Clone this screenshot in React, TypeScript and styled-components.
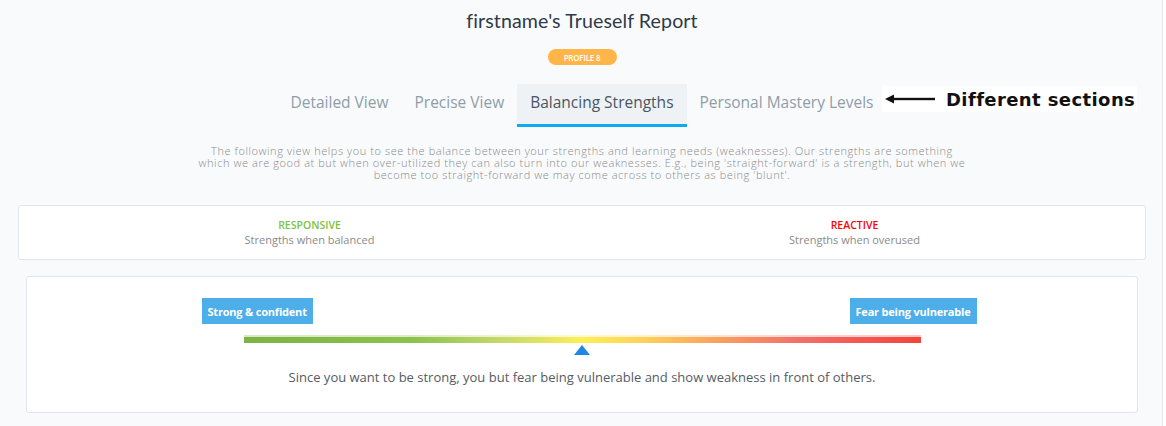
import React from "react";
import styled, { createGlobalStyle } from "styled-components";

const Global = createGlobalStyle`
  html, body { margin: 0; padding: 0; background: #f9fafc; }
  body { font-family: "Open Sans", Arial, sans-serif; }
`;

const Page = styled.div`
  width: 1166px;
  height: 426px;
  box-sizing: border-box;
  background: #f9fafc;
  border-right: 3px solid #fff;
  position: relative;
  overflow: hidden;
  &::after {
    content: "";
    position: absolute;
    top: 0;
    bottom: 0;
    right: 0;
    width: 1px;
    background: #e6e9ee;
  }
`;

const Main = styled.div`
  padding: 9px 17px 0 18px;
  display: flex;
  flex-direction: column;
  align-items: center;
`;

const Title = styled.h1`
  margin: 0;
  font-family: Lato, "Open Sans", sans-serif;
  font-weight: 400;
  font-size: 19.6px;
  line-height: 24px;
  color: #2f3a48;
  letter-spacing: 0.1px;
`;

const Badge = styled.span`
  margin-top: 16px;
  display: inline-flex;
  align-items: center;
  justify-content: center;
  height: 16px;
  width: 69px;
  border-radius: 8px;
  background: #ffb547;
  color: #fff;
  font-family: "Open Sans", sans-serif;
  font-weight: 600;
  font-size: 8px;
  letter-spacing: -0.2px;
`;

const TabsRow = styled.div`
  margin-top: 19px;
  display: flex;
`;

const Tab = styled.div<{ $active?: boolean }>`
  height: 43px;
  padding: 0 13px 5px;
  box-sizing: border-box;
  display: flex;
  align-items: center;
  font-size: 15.5px;
  color: ${(p) => (p.$active ? "#4a5663" : "#8e9ea9")};
  background: ${(p) => (p.$active ? "#eef2f4" : "transparent")};
  border-bottom: 3px solid ${(p) => (p.$active ? "#10a8ef" : "transparent")};
`;

const Annotation = styled.div`
  position: absolute;
  left: 882px;
  top: 86px;
  height: 26px;
  width: 255px;
  background: #fff;
  display: flex;
  align-items: center;
  gap: 11px;
  padding-left: 3px;
  box-sizing: border-box;
  font-family: "DejaVu Sans", sans-serif;
  font-weight: 700;
  font-size: 18px;
  letter-spacing: 0.4px;
  color: #111;
  white-space: nowrap;
`;

const Intro = styled.p`
  margin: 18px 0 0;
  width: 820px;
  text-align: center;
  font-family: "Open Sans", sans-serif;
  font-weight: 300;
  font-size: 11px;
  letter-spacing: 0.57px;
  line-height: 12px;
  color: #8a8a8a;
`;

const Card = styled.div`
  background: #fff;
  border: 1px solid #dfe6ee;
  border-radius: 3px;
  box-sizing: border-box;
`;

const LegendCard = styled(Card)`
  margin-top: 24px;
  width: 100%;
  height: 55px;
  padding: 0 18px;
  display: grid;
  grid-template-columns: 1fr 1fr;
  align-items: center;
`;

const LegendCol = styled.div`
  display: flex;
  flex-direction: column;
  align-items: center;
  padding-top: 1px;
`;

const LegendTitle = styled.div<{ $color: string }>`
  font-size: 10.5px;
  font-weight: 600;
  line-height: 13px;
  color: ${(p) => p.$color};
`;

const LegendSub = styled.div`
  font-size: 11px;
  line-height: 15px;
  color: #8a8a8a;
`;

const ScaleCard = styled(Card)`
  margin-top: 16px;
  width: 1112px;
  height: 137px;
  display: flex;
  flex-direction: column;
  align-items: center;
  padding-top: 21px;
`;

const LabelsRow = styled.div`
  width: 775px;
  margin-left: 14px;
  display: flex;
  justify-content: space-between;
`;

const Label = styled.div`
  height: 26px;
  padding: 0 6px;
  display: flex;
  align-items: center;
  background: #4daee9;
  color: #fff;
  font-size: 11px;
  font-weight: 700;
  letter-spacing: -0.2px;
`;

const Bar = styled.div`
  margin-top: 11px;
  width: 677px;
  height: 8px;
  position: relative;
  background:
    linear-gradient(rgba(255, 255, 255, 0.7), rgba(255, 255, 255, 0.7)) top / 100% 2px no-repeat,
    linear-gradient(
      to right,
      #7cb342 0%,
      #8bc34a 25%,
      #c5d96a 38%,
      #ffee58 50%,
      #fdd55a 58%,
      #f9a15e 70%,
      #f36f6a 82%,
      #f2443a 100%
    );
`;

const Marker = styled.div`
  position: absolute;
  top: 10px;
  transform: translateX(-50%);
  width: 0;
  height: 0;
  border-left: 8px solid transparent;
  border-right: 8px solid transparent;
  border-bottom: 10px solid #1e88e5;
`;

const Summary = styled.p`
  margin: 25px 0 0;
  font-size: 13px;
  color: #555b63;
`;

export default function App() {
  const position = 50;
  return (
    <Page>
      <Global />
      <Main>
        <Title>firstname's Trueself Report</Title>
        <Badge>PROFILE 8</Badge>
        <TabsRow>
          <Tab>Detailed View</Tab>
          <Tab>Precise View</Tab>
          <Tab $active>Balancing Strengths</Tab>
          <Tab>Personal Mastery Levels</Tab>
        </TabsRow>
        <Intro>
          The following view helps you to see the balance between your strengths and learning needs
          (weaknesses). Our strengths are something
          <br />
          which we are good at but when over-utilized they can also turn into our weaknesses. E.g.,
          being 'straight-forward' is a strength, but when we
          <br />
          become too straight-forward we may come across to others as being 'blunt'.
        </Intro>
        <LegendCard>
          <LegendCol>
            <LegendTitle $color="#7dc242">RESPONSIVE</LegendTitle>
            <LegendSub>Strengths when balanced</LegendSub>
          </LegendCol>
          <LegendCol>
            <LegendTitle $color="#ff0000">REACTIVE</LegendTitle>
            <LegendSub>Strengths when overused</LegendSub>
          </LegendCol>
        </LegendCard>
        <ScaleCard>
          <LabelsRow>
            <Label>Strong &amp; confident</Label>
            <Label>Fear being vulnerable</Label>
          </LabelsRow>
          <Bar>
            <Marker style={{ left: `${position}%` }} />
          </Bar>
          <Summary>
            Since you want to be strong, you but fear being vulnerable and show weakness in front of others.
          </Summary>
        </ScaleCard>
      </Main>
      <Annotation>
        <svg width="50" height="10" viewBox="0 0 50 10">
          <path d="M0 5 L9 0.5 L9 9.5 Z" fill="#111" />
          <rect x="6" y="3.8" width="44" height="2.4" fill="#111" />
        </svg>
        Different sections
      </Annotation>
    </Page>
  );
}
